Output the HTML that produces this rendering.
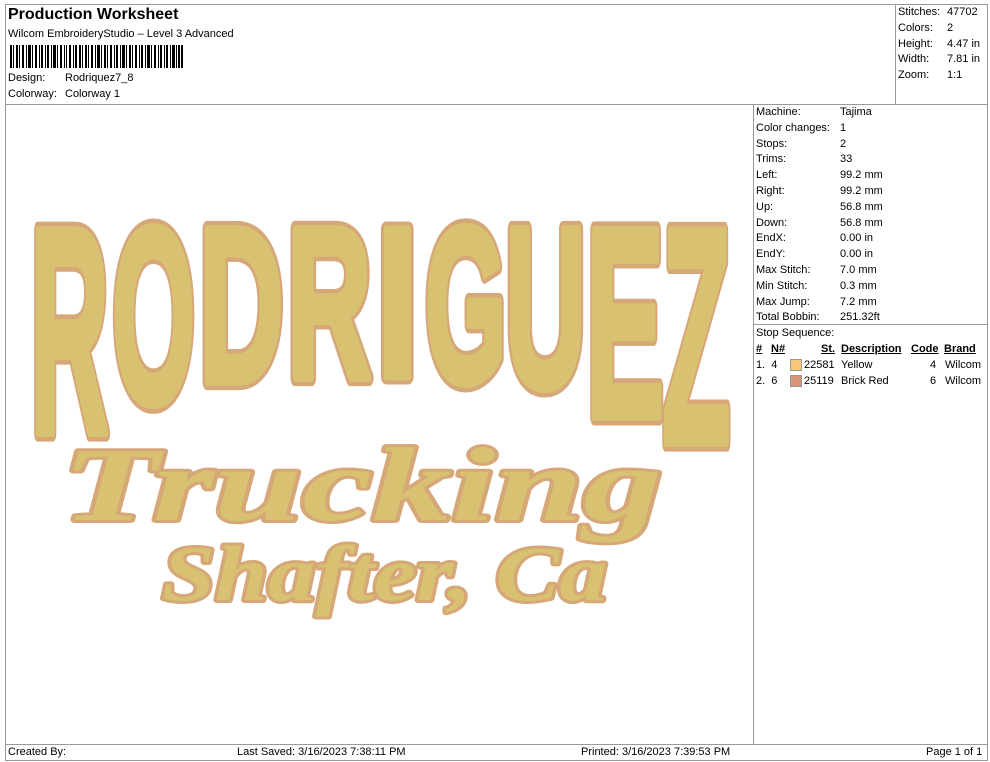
<!DOCTYPE html>
<html><head><style>
body{margin:0;width:990px;height:762px;background:#fff;font-family:"Liberation Sans",sans-serif;color:#000;position:relative;overflow:hidden}
.a{position:absolute}
.b{position:absolute;border:1px solid #999;box-sizing:border-box}
.t{font-size:11px;line-height:15.8px}
</style></head><body>
<div class="b" style="left:5px;top:4px;width:891px;height:101px"></div>
<div class="b" style="left:895px;top:4px;width:93px;height:101px"></div>
<div class="b" style="left:5px;top:104px;width:749px;height:641px"></div>
<div class="b" style="left:753px;top:104px;width:235px;height:221px"></div>
<div class="b" style="left:753px;top:324px;width:235px;height:421px"></div>
<div class="b" style="left:5px;top:744px;width:983px;height:17px"></div>
<div class="a" style="left:8px;top:6px;font-size:16px;font-weight:bold">Production Worksheet</div>
<div class="a" style="left:8px;top:28px;font-size:11px">Wilcom EmbroideryStudio – Level 3 Advanced</div>
<svg class="a" style="left:10px;top:45px" width="173" height="23">
<g fill="#000">
<rect x="0" width="2" height="23"/><rect x="3" width="1" height="23"/><rect x="6" width="2" height="23"/><rect x="9" width="1" height="23"/><rect x="12" width="2" height="23"/><rect x="16" width="1" height="23"/><rect x="18" width="3" height="23"/><rect x="22" width="1" height="23"/><rect x="25" width="2" height="23"/><rect x="29" width="1" height="23"/><rect x="31" width="2" height="23"/><rect x="35" width="1" height="23"/><rect x="37" width="2" height="23"/><rect x="41" width="1" height="23"/><rect x="43" width="3" height="23"/><rect x="47" width="1" height="23"/><rect x="50" width="2" height="23"/><rect x="54" width="1" height="23"/><rect x="56" width="1" height="23"/><rect x="59" width="2" height="23"/><rect x="63" width="1" height="23"/><rect x="65" width="2" height="23"/><rect x="69" width="2" height="23"/><rect x="72" width="1" height="23"/><rect x="75" width="2" height="23"/><rect x="78" width="1" height="23"/><rect x="81" width="2" height="23"/><rect x="85" width="1" height="23"/><rect x="87" width="3" height="23"/><rect x="91" width="1" height="23"/><rect x="94" width="2" height="23"/><rect x="97" width="1" height="23"/><rect x="100" width="2" height="23"/><rect x="104" width="1" height="23"/><rect x="106" width="2" height="23"/><rect x="110" width="1" height="23"/><rect x="112" width="3" height="23"/><rect x="116" width="1" height="23"/><rect x="119" width="2" height="23"/><rect x="122" width="1" height="23"/><rect x="125" width="2" height="23"/><rect x="129" width="1" height="23"/><rect x="131" width="2" height="23"/><rect x="135" width="1" height="23"/><rect x="137" width="3" height="23"/><rect x="141" width="1" height="23"/><rect x="144" width="2" height="23"/><rect x="148" width="1" height="23"/><rect x="150" width="2" height="23"/><rect x="154" width="1" height="23"/><rect x="156" width="2" height="23"/><rect x="160" width="1" height="23"/><rect x="162" width="3" height="23"/><rect x="166" width="1" height="23"/><rect x="168" width="2" height="23"/><rect x="171" width="2" height="23"/>
</g></svg>
<div class="a t" style="left:8px;top:71px">Design:</div><div class="a t" style="left:65px;top:71px">Rodriquez7_8</div>
<div class="a t" style="left:8px;top:87px">Colorway:</div><div class="a t" style="left:65px;top:87px">Colorway 1</div>
<div class="a t" style="left:898px;top:5px">Stitches:<br>Colors:<br>Height:<br>Width:<br>Zoom:</div>
<div class="a t" style="left:947px;top:5px">47702<br>2<br>4.47 in<br>7.81 in<br>1:1</div>
<div class="a t" style="left:756px;top:105px">Machine:<br>Color changes:<br>Stops:<br>Trims:<br>Left:<br>Right:<br>Up:<br>Down:<br>EndX:<br>EndY:<br>Max Stitch:<br>Min Stitch:<br>Max Jump:<br>Total Bobbin:</div>
<div class="a t" style="left:840px;top:105px">Tajima<br>1<br>2<br>33<br>99.2 mm<br>99.2 mm<br>56.8 mm<br>56.8 mm<br>0.00 in<br>0.00 in<br>7.0 mm<br>0.3 mm<br>7.2 mm<br>251.32ft</div>
<div class="a t" style="left:756px;top:326px">Stop Sequence:</div>
<div class="a t" style="left:756px;top:342px;font-weight:bold;text-decoration:underline">#</div>
<div class="a t" style="left:771px;top:342px;font-weight:bold;text-decoration:underline">N#</div>
<div class="a t" style="left:821px;top:342px;font-weight:bold;text-decoration:underline">St.</div>
<div class="a t" style="left:841px;top:342px;font-weight:bold;text-decoration:underline">Description</div>
<div class="a t" style="left:911px;top:342px;font-weight:bold;text-decoration:underline">Code</div>
<div class="a t" style="left:944px;top:342px;font-weight:bold;text-decoration:underline">Brand</div>
<div class="a t" style="left:756px;top:358px">1.&nbsp; 4<br>2.&nbsp; 6</div>
<div class="a" style="left:790px;top:359px;width:10px;height:10px;background:#f8c878;border:1px solid #999"></div>
<div class="a" style="left:790px;top:375px;width:10px;height:10px;background:#d89878;border:1px solid #999"></div>
<div class="a t" style="left:804px;top:358px">22581<br>25119</div>
<div class="a t" style="left:841px;top:358px">Yellow<br>Brick Red</div>
<div class="a t" style="left:930px;top:358px">4<br>6</div>
<div class="a t" style="left:945px;top:358px">Wilcom<br>Wilcom</div>
<div class="a t" style="left:8px;top:745px">Created By:</div>
<div class="a t" style="left:237px;top:745px">Last Saved: 3/16/2023 7:38:11 PM</div>
<div class="a t" style="left:581px;top:745px">Printed: 3/16/2023 7:39:53 PM</div>
<div class="a t" style="left:926px;top:745px">Page 1 of 1</div>
<svg class="a" style="left:0;top:0" width="753" height="740">
<defs>
<g id="L" font-family="Liberation Sans" font-weight="bold" font-size="255">
<text vector-effect="non-scaling-stroke" transform="translate(30,433) scale(0.43,1.156)">R</text>
<text vector-effect="non-scaling-stroke" transform="translate(112,403) scale(0.42,0.989)">O</text>
<text vector-effect="non-scaling-stroke" transform="translate(199,382) scale(0.46,0.872)">D</text>
<text vector-effect="non-scaling-stroke" transform="translate(287,378) scale(0.46,0.85)">R</text>
<text vector-effect="non-scaling-stroke" transform="translate(376,377) scale(0.60,0.844)">I</text>
<text vector-effect="non-scaling-stroke" transform="translate(425,382) scale(0.41,0.872)">G</text>
<text vector-effect="non-scaling-stroke" transform="translate(505,387) scale(0.44,0.9)">U</text>
<text vector-effect="non-scaling-stroke" transform="translate(586,417) scale(0.46,1.067)">E</text>
<text vector-effect="non-scaling-stroke" transform="translate(662,443) scale(0.44,1.211)">Z</text>
</g>
</defs>
<use href="#L" fill="#d6a777" stroke="#d6a777" stroke-width="13" stroke-linejoin="round"/>
<use href="#L" fill="#d8c272" stroke="#d8c272" stroke-width="6" stroke-linejoin="round"/>
<g fill="#d8c272" stroke="#d6a777" stroke-width="6" paint-order="stroke" stroke-linejoin="round">
<text x="62" y="520" font-family="Liberation Serif" font-style="italic" font-weight="bold" font-size="105" textLength="600" lengthAdjust="spacingAndGlyphs">Trucking</text>
<text x="162" y="600" font-family="Liberation Serif" font-style="italic" font-weight="bold" font-size="78" textLength="445" lengthAdjust="spacingAndGlyphs">Shafter, Ca</text>
</g></svg>
</body></html>
